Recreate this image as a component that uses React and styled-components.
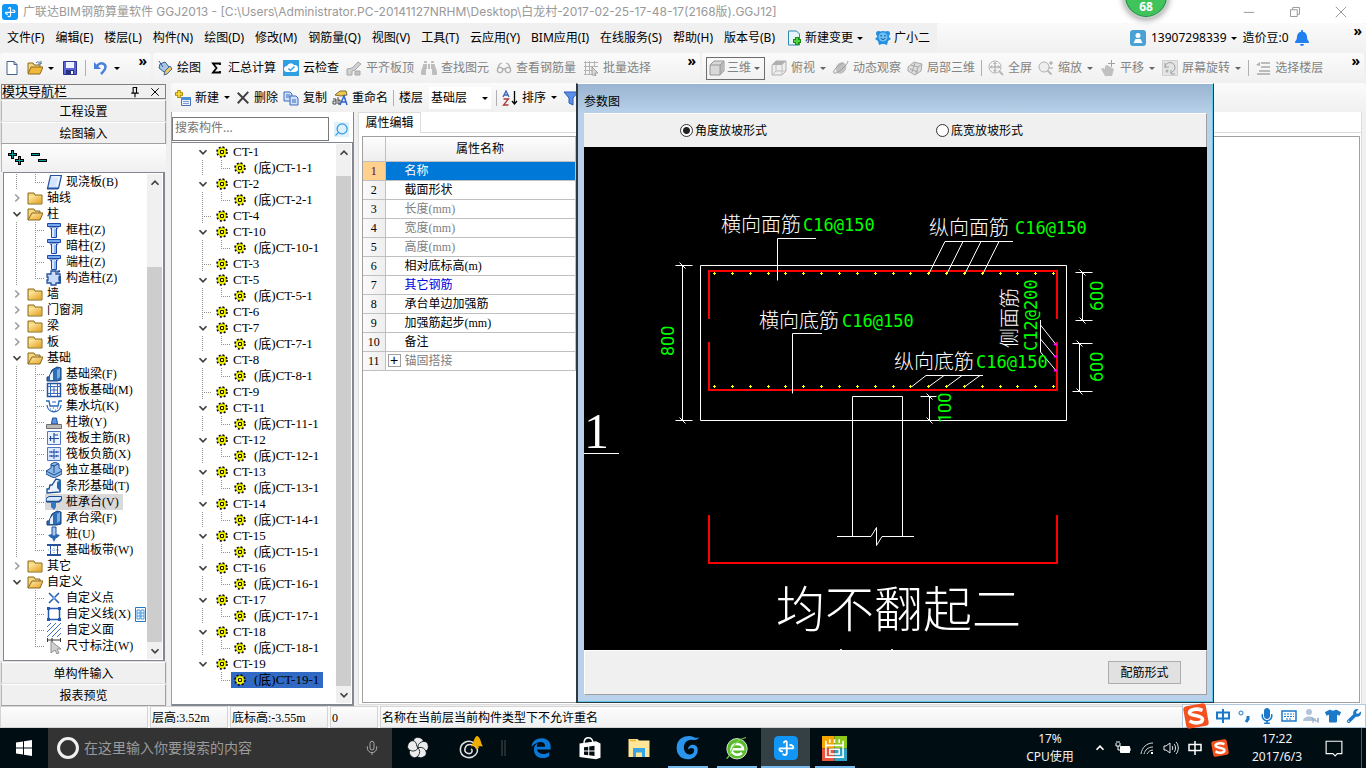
import React, { useState } from 'react';
import styled, { createGlobalStyle, css } from 'styled-components';
import { Glasses, Search, Mic } from 'lucide-react';
import { FaBinoculars, FaBell, FaWrench, FaTshirt, FaMicrophone } from 'react-icons/fa';

const UI_FONT = '"Noto Sans", "Noto Sans CJK SC", sans-serif';
const SONG_FONT = '"Liberation Serif", "Noto Sans CJK SC", serif';

const GlobalStyle = createGlobalStyle`
  * {
    box-sizing: border-box;
  }

  body {
    margin: 0;
    font: 12px/16px ${UI_FONT};
    color: #000;
    background: #f0f0f0;
  }

  button, input, select {
    font: inherit;
    color: inherit;
    margin: 0;
    padding: 0;
    border: 0;
    background: none;
  }

  ul {
    list-style: none;
    margin: 0;
    padding: 0;
  }

  svg {
    display: block;
    flex: none;
  }
`;

const Page = styled.div`
  display: flex;
  flex-direction: column;
  min-height: 100vh;
  overflow: hidden;
`;

/* ---------- title bar ---------- */

const TitleBar = styled.header`
  position: relative;
  display: flex;
  align-items: center;
  height: 23px;
  padding: 0 2px;
  background: #fff;
  color: #999;
  white-space: nowrap;
`;

const TitleText = styled.div`
  flex: 1;
  padding-left: 5px;
  font-family: Inter, "Noto Sans CJK SC", sans-serif;
`;

const WindowButton = styled.button`
  width: 46px;
  height: 20px;
  display: flex;
  align-items: center;
  justify-content: center;
`;

const SpeedBall = styled.div`
  position: absolute;
  right: 197px;
  top: -27px;
  width: 46px;
  height: 46px;
  border-radius: 50%;
  border: 2px solid #c8ccc8;
  background: #3fc35a;
  box-shadow: inset 0 0 0 1px #1f8a4a, 0 1px 6px rgba(0, 0, 0, 0.4);
  color: #fff;
  font-weight: bold;
  line-height: 14px;
  text-align: center;
  padding-top: 25px;
`;

/* ---------- menus and tool bars ---------- */

const MenuBar = styled.nav`
  display: flex;
  height: 30px;
  background: #f0f0f0;
  white-space: nowrap;
`;

const MenuList = styled.div`
  display: flex;
  align-items: center;
  gap: 11px;
  width: 937px;
  padding: 0 0 0 7px;
`;

const MenuButton = styled.button`
  display: flex;
  align-items: center;
  gap: 3px;
`;

const barSurface = css`
  background: linear-gradient(#fbfbfb, #f0f0f0);
  border-radius: 3px;
`;

const MenuFiller = styled.div`
  ${barSurface}
  flex: 1;
`;

const AccountBar = styled.div`
  ${barSurface}
  display: flex;
  align-items: center;
  gap: 5px;
  width: 240px;
  padding: 0 4px;
`;

const ToolRow = styled.div`
  display: flex;
  height: 30px;
  background: #f0f0f0;
`;

const ToolGroup = styled.div`
  ${barSurface}
  display: flex;
  align-items: center;
  gap: ${p => p.$gap || 7}px;
  width: ${p => (p.$width ? `${p.$width}px` : 'auto')};
  flex: ${p => (p.$width ? 'none' : 1)};
  padding: 0 4px;
  margin-right: 2px;
  white-space: nowrap;
`;

const ToolButton = styled.button`
  display: flex;
  align-items: center;
  gap: ${p => (p.$tight ? 2 : 4)}px;
  color: ${p => (p.$dim ? '#838383' : '#000')};
  ${p => p.$boxed && css`
    height: 23px;
    padding: 0 3px 0 2px;
    border: 1px solid #6d6d6d;
  `}
`;

const Separator = styled.span`
  width: 1px;
  height: 16px;
  background: #b0b0b0;
`;

const More = styled.button`
  align-self: flex-start;
  margin-left: auto;
  font-weight: bold;
  font-size: 14px;
  line-height: 16px;
`;

const Arrow = styled.span`
  border: 3px solid transparent;
  border-top-color: ${p => (p.$dim ? '#666' : '#000')};
  border-bottom: 0;
  margin: 0 1px;
`;

const Main = styled.main`
  position: relative;
  display: flex;
  flex: 1;
`;

/* ---------- module navigation ---------- */

const NavPane = styled.aside`
  display: flex;
  flex-direction: column;
  width: 166px;
  padding: 1px 0 0 1px;
  font-family: ${SONG_FONT};
`;

const PaneCaption = styled.div`
  display: flex;
  align-items: center;
  gap: 8px;
  height: 15px;
  margin-bottom: 1px;
  padding-right: 4px;
  border: 1px solid #808080;
  line-height: 13px;
  font-size: 13px;

  span {
    flex: 1;
  }
`;

const PaneButton = styled.button`
  height: 22px;
  padding-top: 1px;
  border: 1px solid;
  border-color: #fff #a0a0a0 #a0a0a0 #b8b8b8;
  background: #f0f0f0;
  box-shadow: 0 0 0 1px #e0e0e0;
`;

const PaneTools = styled.div`
  display: flex;
  gap: 7px;
  align-items: center;
  height: 28px;
  padding-left: 6px;
  border-left: 1px solid #b8b8b8;
  background: linear-gradient(#fdfdfd, #f0f0f0);
`;

const TreeBox = styled.div`
  display: flex;
  flex: 1;
  background: #fff;
  border: 1px solid #828790;
  border-right-width: 2px;
  border-bottom-width: 2px;
  margin: 0 1px 0 2px;
  padding: 1px 1px 1px 0;
`;

const TreeList = styled.ul`
  flex: 1;
  padding-left: ${p => p.$indent}px;
  overflow: hidden;
  font-family: ${SONG_FONT};
  font-size: ${p => p.$size || 12}px;
`;

const TreeRow = styled.li`
  display: flex;
  align-items: center;
  height: 16px;
  white-space: nowrap;
`;

const dotsDown = 'repeating-linear-gradient(#909090 0 1px, transparent 1px 2px)';
const dotsRight = 'repeating-linear-gradient(90deg, #909090 0 1px, transparent 1px 2px)';

const guides = {
  none: css``,
  down: css`
    background: ${dotsDown} 9px 0 / 1px 16px no-repeat;
  `,
  branch: css`
    background: ${dotsDown} 9px 0 / 1px 16px no-repeat, ${dotsRight} 9px 8px / 10px 1px no-repeat;
  `,
  end: css`
    background: ${dotsDown} 9px 0 / 1px 8px no-repeat, ${dotsRight} 9px 8px / 10px 1px no-repeat;
  `,
};

const Guide = styled.span`
  display: flex;
  align-items: center;
  justify-content: center;
  flex: none;
  width: 19px;
  height: 16px;
  ${p => guides[p.$kind || 'none']}
`;

const TreeLabel = styled.span`
  display: flex;
  align-items: center;
  gap: ${p => p.$gap || 4}px;
  height: 16px;
  padding: 0 4px 0 ${p => p.$inset || 1}px;
  background: ${p => p.$selected || 'none'};
`;

const ScrollTrack = styled.div`
  display: flex;
  flex-direction: column;
  align-items: center;
  width: 15px;
  background: #f0f0f0;
`;

const ScrollButton = styled.button`
  display: flex;
  align-items: center;
  justify-content: center;
  width: 15px;
  height: 17px;
`;

const ScrollSpace = styled.div`
  flex: ${p => p.$share};
  width: 100%;
  background: ${p => (p.$thumb ? '#cdcdcd' : 'none')};
`;

/* ---------- work area ---------- */

const WorkArea = styled.section`
  display: flex;
  flex-direction: column;
  flex: 1;
  margin-left: 5px;
  min-width: 0;
`;

const LocalTools = styled.div`
  ${barSurface}
  display: flex;
  align-items: center;
  gap: 5px;
  height: 29px;
  padding-left: 4px;
  white-space: nowrap;
`;

const FloorPicker = styled.label`
  display: flex;
  align-items: center;
  gap: 6px;
`;

const FloorSelect = styled.select`
  appearance: none;
  width: 62px;
  height: 22px;
  padding-left: 2px;
  background: #fff url("data:image/svg+xml,%3Csvg xmlns='http://www.w3.org/2000/svg' width='6' height='3'%3E%3Cpath d='M0 0h6L3 3z'/%3E%3C/svg%3E") no-repeat 53px 10px;
  border-radius: 0;
`;

const Panels = styled.div`
  display: flex;
  flex: 1;
`;

const ComponentPane = styled.section`
  display: flex;
  flex-direction: column;
  width: 183px;
  background: #fff;
  border-right: 1px solid #828790;
  border-left: 1px solid #a0a0a0;

  ${TreeBox} {
    margin: 0;
    border-left: 0;
    border-right-width: 1px;
  }
`;

const SearchRow = styled.form`
  display: flex;
  gap: 5px;
  align-items: center;
  padding: 5px 0 1px;
`;

const SearchInput = styled.input`
  width: 157px;
  height: 24px;
  border: 1px solid #7a7a7a;
  background: #fff;
  padding: 0 2px 3px;

  &::placeholder {
    color: #757575;
  }
`;

const SearchButton = styled.button`
  width: 15px;
  height: 15px;
  color: #2f9be6;
  background: #dff0fb;
`;

const PropertyPane = styled.section`
  display: flex;
  flex-direction: column;
  flex: 1;
  margin: 0 4px 1px;
  background: #fff;
  border: 1px solid #dcdcdc;
  border-top: 0;
`;

const Tabs = styled.div`
  display: flex;
  height: 21px;
`;

const Tab = styled.button`
  width: 62px;
  border: 1px solid #dcdcdc;
  border-left: 0;
  border-bottom: 0;
`;

const TabRest = styled.div`
  flex: 1;
  border-bottom: 1px solid #dcdcdc;
`;

const GridBox = styled.div`
  flex: 1;
  margin: 3px 1px 1px 3px;
  border: 1px solid #a0a0a0;
`;

const PropertyTable = styled.table`
  border-collapse: collapse;
  table-layout: fixed;
  width: 212px;
  font-family: ${SONG_FONT};

  th, td {
    height: 19px;
    padding: 0;
    border: 1px solid #c0c0c0;
    border-top: 0;
    border-left: 0;
    line-height: 14px;
    font-weight: normal;
  }

  th {
    background: linear-gradient(90deg, #fafafa, #eee);
  }

  thead th {
    height: 24px;
    background: linear-gradient(#fdfdfd, #eee);
  }
`;

const PropRow = styled.tr`
  color: ${p => p.$color || '#000'};

  th {
    color: #000;
  }

  ${p => p.$active && css`
    color: #fff;

    td {
      background: #0078d7;
    }

    && th {
      background: #ffd18c;
      color: #600040;
    }
  `}
`;

const PropName = styled.div`
  display: flex;
  align-items: center;
  gap: 4px;
  padding-left: ${p => (p.$expandable ? 2 : 19)}px;
`;

const Expander = styled.button`
  width: 13px;
  height: 13px;
  border: 1px solid #a0a0a0;
  font: 14px/9px "Liberation Sans", sans-serif;
  color: #000;
`;

/* ---------- dialog ---------- */

const Dialog = styled.section`
  position: absolute;
  top: 0;
  right: 152px;
  bottom: 3px;
  left: 576px;
  display: flex;
  flex-direction: column;
  padding: 0 6px 7px;
  border: 1px solid #303840;
  border-top-color: #fff;
  border-left-width: 2px;
  background: linear-gradient(#99b4d1, #b9d1ea 30px);
  box-shadow: inset 0 -1px #5cc8e8, inset -1px 0 #5cc8e8;
`;

const DialogTitle = styled.h2`
  margin: 0;
  padding-top: 10px;
  height: 29px;
  font-size: 12px;
  line-height: 16px;
  font-weight: normal;
`;

const RadioBar = styled.div`
  display: flex;
  align-items: center;
  height: 34px;
  background: #f0f0f0;
  border-top: 1px solid #fff;
  border-right: 1px solid #a0a0a0;
`;

const RadioLabel = styled.label`
  display: flex;
  align-items: center;
  gap: 2px;
  width: 256px;

  &:first-child {
    margin-left: 96px;
  }
`;

const Radio = styled.input`
  appearance: none;
  width: 13px;
  height: 13px;
  border: 1px solid #333;
  border-radius: 50%;
  background: #fff;

  &:checked {
    background: radial-gradient(circle, #222 3px, #fff 4px);
  }
`;

const Canvas = styled.div`
  flex: 1;
  background: #000;

  svg {
    width: 100%;
    height: 100%;
  }
`;

const DialogFooter = styled.div`
  display: flex;
  justify-content: flex-end;
  align-items: center;
  height: 45px;
  padding-right: 25px;
  background: #f0f0f0;
  border: 1px solid #a0a0a0;
  border-top: 1px solid #fff;
  border-left-color: #fff;
`;

const PushButton = styled.button`
  width: 73px;
  height: 23px;
  border: 1px solid #adadad;
  background: #e1e1e1;
`;

/* ---------- status bar, input method bar, task bar ---------- */

const StatusBar = styled.footer`
  position: relative;
  display: flex;
  gap: 2px;
  height: 22px;
  background: #f8f8f8;
  font-family: ${SONG_FONT};
  line-height: 22px;
  white-space: nowrap;
`;

const StatusCell = styled.div`
  width: ${p => (p.$width ? `${p.$width}px` : 'auto')};
  flex: ${p => (p.$width ? 'none' : 1)};
  padding-left: 1px;
  border: 1px solid #d4d4d4;
  background: linear-gradient(#fdfdfd, #f0f0f0);
`;

const ImeBar = styled.div`
  position: absolute;
  right: 0;
  bottom: 0;
  display: flex;
  align-items: center;
  gap: 6px;
  width: 184px;
  height: 24px;
  background: #fbfdff;
  border: 1px solid #b4c8dc;
  color: #1c78c8;
`;

const TaskBar = styled.div`
  display: flex;
  height: 40px;
  background: #000d12;
  color: #f2f2f2;
`;

const StartButton = styled.button`
  display: flex;
  align-items: center;
  justify-content: center;
  width: 48px;
`;

const CortanaBox = styled.label`
  display: flex;
  align-items: center;
  gap: 4px;
  width: 344px;
  padding: 0 12px 0 8px;
  background: #333;
`;

const CortanaInput = styled.input`
  flex: 1;
  font-size: 14px;
  outline: 0;

  &::placeholder {
    color: #9a9a9a;
  }
`;

const TaskButton = styled.button`
  display: flex;
  align-items: center;
  justify-content: center;
  width: ${p => p.$width || 49}px;
  ${p => p.$running && css`
    background: linear-gradient(#76b9ed, #76b9ed) no-repeat center bottom / ${p.$active ? 49 : 40}px 2px ${p.$active ? '#354045' : ''};
  `}
`;

const Tray = styled.div`
  display: flex;
  align-items: center;
  gap: 8px;
  margin-left: auto;
`;

const TrayText = styled.div`
  width: ${p => p.$width}px;
  line-height: 18px;
  text-align: center;
`;

const DesktopEdge = styled.button`
  width: 5px;
  height: 40px;
  margin-left: 10px;
  border-left: 1px solid #50585c;
`;

/* ---------- icons ---------- */

const Svg = ({ size = 16, children, ...rest }) => (
  <svg width={size} height={size} viewBox="0 0 16 16" fill="none" aria-hidden="true" {...rest}>
    {children}
  </svg>
);

const BrandIcon = ({ size }) => (
  <Svg size={size}>
    <rect width="16" height="16" rx="3" fill="#1296f5" />
    <path d="M8.500 3.500v8c0 1.500-2.500 1.500-2.500.2M3.500 8.300h9.500M13 8.300c0-2-1.500-2.600-2.700-2.100M3.500 8.300c0 1.700 1.200 2.200 2.300 1.600M8.500 3.600c-1.200-.4-2 .3-1.800 1.200" stroke="#fff" strokeWidth="1.200" />
  </Svg>
);

const icons = {
  newFile: <Svg><path d="M3 1.5h7l3 3v10H3z" fill="#fff" stroke="#44618c" /><path d="M10 1.5v3h3" stroke="#44618c" /></Svg>,
  open: <Svg><path d="M1 13V3h5l1 2h6v2" fill="#f5d683" stroke="#8d6a1e" /><path d="M1 14l3-7h12l-3 7z" fill="#f1b93c" stroke="#8d6a1e" /><path d="M9 3c2-2 4-1 5 1M14 1v3h-3" stroke="#4a6b8f" /></Svg>,
  save: <Svg><path d="M1.500 1.500h13v13h-13z" fill="#5a64d4" stroke="#2c3590" /><path d="M4 2h8v6H4z" fill="#eef1ff" /><path d="M4 10h8v4H4z" fill="#26307e" /><path d="M9 11h2v3H9z" fill="#fff" /></Svg>,
  undo: <Svg><path d="M1 2v7h7z" fill="#4a80d8" /><path d="M4 6c4-5 10-2 8 3-1 2-2 3-4 5" stroke="#4a80d8" strokeWidth="2.500" /></Svg>,
  draw: <Svg><path d="M3 4l5-2 4 5-5 5-5-4z" fill="#a9c8e8" stroke="#345c8c" /><path d="M2 1l4 6" stroke="#345c8c" /><path d="M13 6l2 3-5 5-3 1 1-4z" fill="#f0c75a" stroke="#46699b" /></Svg>,
  sigma: <Svg><path d="M12 5V3.500H5l3.500 4.500L5 12.500h7V11" stroke="#000" strokeWidth="1.800" /></Svg>,
  cloud: <Svg><rect width="16" height="16" fill="#2e9fe0" /><path d="M4 12a3 3 0 010-6 4 4 0 017-1 3.500 3.500 0 011 7z" fill="#fff" /><path d="M5.500 8.500l2 2 4-4" stroke="#2e9fe0" strokeWidth="1.500" /></Svg>,
  slab: <Svg><path d="M1 9l5-1 6-6 3 2-6 6-3 1v4H1z" fill="#d0d0d0" stroke="#a8a8a8" /><path d="M9 15v-4h5v4z" fill="#c4c4c4" stroke="#a8a8a8" /></Svg>,
  find: <FaBinoculars size={16} color="#bdbdbd" />,
  glasses: <Glasses size={16} color="#b0b0b0" />,
  batch: <Svg><path d="M1 2.500h14M1 6.500h14M1 10.500h8M2.500 1v14M6.500 1v14M11.500 1v6M1 14.500h8" stroke="#b4b4b4" /><path d="M9 7l6 6-3 0 1 3-2-1-2 0z" fill="#d8d8d8" stroke="#a0a0a0" /></Svg>,
  cube: <Svg><path d="M1 5l4-4h10v10l-4 4H1z" fill="#d8d8d8" stroke="#989898" /><path d="M11 5l4-4v10l-4 4z" fill="#b8b8b8" /><path d="M1 5h10v10M11 5l4-4" stroke="#989898" /></Svg>,
  top: <Svg><path d="M1 5l4-4h10v10l-4 4H1z" fill="#eee" stroke="#b0b0b0" /><path d="M1 5l4-4h10l-4 4z" fill="#b0b0b0" /><path d="M11 5v10M5 5v6M5 11h10M5 11l-4 4" stroke="#c0c0c0" /></Svg>,
  orbit: <Svg><ellipse cx="8" cy="8" rx="5" ry="6" transform="rotate(35 8 8)" fill="#c0c0c0" /><path d="M15 1c0 4-12 14-14 12s4-8 9-10" stroke="#a0a0a0" /></Svg>,
  part: <Svg><path d="M1 7l6-5 8 2-1 7-6 4-7-4z" fill="#ddd" stroke="#a8a8a8" /><path d="M4 5l7 2-2 7M8 3l-3 9M3 9l8 3M11 7l3-2" stroke="#a8a8a8" /></Svg>,
  full: <Svg><circle cx="7" cy="7" r="6" stroke="#b0b0b0" /><path d="M7 2.500v9M2.500 7h9M5.500 4L7 2.500 8.500 4M5.500 10L7 11.500 8.500 10M4 5.500L2.500 7 4 8.500M10 5.500L11.500 7 10 8.500" stroke="#a0a0a0" /><path d="M11 11l4 4" stroke="#b8b8b8" strokeWidth="2" /></Svg>,
  zoom: <Svg><circle cx="6" cy="7" r="5" fill="#eee" stroke="#b0b0b0" /><path d="M9.500 10.500l4 4" stroke="#b8b8b8" strokeWidth="2" /><path d="M13 1v4M11 3h4M11 8h4" stroke="#a0a0a0" /></Svg>,
  pan: <Svg><path d="M1 9l2-1 2 1V6l2-1 5 3 2 1-2 7H5z" fill="#c0c0c0" /><path d="M11.500 0v7M8 3.500h7" stroke="#a0a0a0" /></Svg>,
  rotate: <Svg><path d="M.500.500h15v15H.500z" fill="#e4e4e4" stroke="#d0d0d0" /><path d="M3 8a5 5 0 119 2.500l-3 2.500M9 10v4h4M3 3v4h4" stroke="#a0a0a0" /><circle cx="5" cy="11" r="1.500" fill="#b0b0b0" /></Svg>,
  floor: <Svg><path d="M6 3h9M6 7h9M4 11h11M2 14h13" stroke="#a8a8a8" strokeWidth="1.500" /><path d="M1 5l4-3v4z" fill="#b0b0b0" /></Svg>,
  create: <Svg><path d="M6.500 7.500h9v8h-9z" fill="#eaf2ff" stroke="#4a72b8" /><path d="M6 7h10v3H6z" fill="#4a90d8" /><path d="M8 11.500h6M8 13.500h6" stroke="#7a9ad0" /><path d="M4 0v8M0 4h8" stroke="#a98500" strokeWidth="3.500" /><path d="M4 1v6M1 4h6" stroke="#ffe13c" strokeWidth="1.600" /></Svg>,
  remove: <Svg size={14}><path d="M2 2l12 12M14 1L2 14" stroke="#404040" strokeWidth="2.200" /></Svg>,
  copy: <Svg><path d="M1 2h6l2 2v7H1z" fill="#cfe0fa" stroke="#3c6abf" /><path d="M7 6h6l2 2v7H7z" fill="#cfe0fa" stroke="#3c6abf" /><path d="M3 5h4M3 7h4M9 10h4M9 12h4" stroke="#3c6abf" /></Svg>,
  rename: <Svg><path d="M3 5l5-4h6l1 4-6 1z" fill="#f2c84c" stroke="#7c6a30" /><path d="M1 9h3v5H1v-3h3M6 7v7h2v-4H6" stroke="#444" /><path d="M8 15l4-9 3 9M10 12h4" stroke="#2f62c8" strokeWidth="1.500" /></Svg>,
  sort: <Svg><path d="M1 7l3-6 3 6M2 5h4" stroke="#3a64b8" strokeWidth="1.300" /><path d="M1.500 9h5l-5 6h5" stroke="#a83a3a" strokeWidth="1.300" /><path d="M12.500 1v13M10 11l2.500 3 2.500-3" stroke="#000" strokeWidth="1.300" /></Svg>,
  filter: <Svg><path d="M1 2h14l-5 6v7l-4-2V8z" fill="#5a90e8" stroke="#2a5cb8" /></Svg>,
  change: <Svg><path d="M2.500 1h8l3 3v11h-11z" fill="#e8f6fc" stroke="#2f88b0" /><path d="M11 7v8M7 11h8" stroke="#188a18" strokeWidth="4" /><path d="M11 8v6M8 11h6" stroke="#52d23c" strokeWidth="2" /></Svg>,
  mascot: <Svg><circle cx="3.500" cy="3.500" r="2.500" fill="#258fe0" /><circle cx="12.500" cy="3.500" r="2.500" fill="#258fe0" /><path d="M8 1c4 0 6 3 6 6l2 2-3 2-1 4-3-1H7l-3 1-1-4-3-2 2-2c0-3 2-6 6-6z" fill="#258fe0" /><circle cx="8" cy="7" r="4.500" fill="#6cc0f8" /><path d="M6 8c1 2 3 2 4 0M6 5v1.500M10 5v1.500" stroke="#0d3d6c" /></Svg>,
  account: <Svg><rect width="16" height="16" rx="3" fill="#4aa2d4" /><path d="M8 3a2.500 2.500 0 010 5 2.500 2.500 0 010-5zM3.500 13l2-4h5l2 4z" fill="#fff" /></Svg>,
  folder: <Svg><path d="M1 3h6l1 2h7v9H1z" fill="#f6d77a" stroke="#86661e" /><path d="M2 6h12v7H2z" fill="url(#folderFill)" /></Svg>,
  folderOpen: <Svg><path d="M1 14V3h6l1 2h5v3" fill="#f6d77a" stroke="#86661e" /><path d="M1 14l4-7h11l-3 7z" fill="url(#folderFill)" stroke="#86661e" /></Svg>,
  gear: (
    <Svg size={12}>
      <circle cx="8" cy="8" r="6" fill="#ff0" stroke="#000" strokeWidth="3.500" strokeDasharray="2.400 2.300" />
      <circle cx="8" cy="8" r="5.500" fill="#ff0" stroke="#6a6a00" strokeDasharray="2 2" />
      <circle cx="8" cy="8" r="2.300" fill="#ff0" stroke="#000" strokeWidth="1.400" />
    </Svg>
  ),
  slabCast: <Svg><path d="M4.500 1.500h11l-3 13h-11z" fill="#d4e6ff" stroke="#24509c" strokeWidth="1.200" /><path d="M6 3h7l-2 9" stroke="#fff" /><path d="M1 14.500h11" stroke="#24509c" strokeWidth="2" /></Svg>,
  column: <Svg><path d="M1.500 1.500h13v3h-13z" fill="#78a8f0" stroke="#1c48a8" /><path d="M3 5.500h10l-2 1.500H5z" fill="#1c48a8" /><path d="M5.500 6v9.500h5V6" fill="#d8e8ff" stroke="#1c48a8" /><path d="M9 7v8" stroke="#5088e0" /></Svg>,
  columnBuilt: <Svg><path d="M5 1h5v3h4v3h-1v3h1v3h-4v2H5v-2H1v-3h1V7H1V4h4z" fill="#c8dcfa" stroke="#24509c" strokeWidth="1.300" /><path d="M11 2l3-1M12 13l3-1M14 6v5" stroke="#24509c" strokeWidth="2" /></Svg>,
  beam: <Svg><path d="M1 15v-4h2l3-7 5-3 4 1v12l-4 1z" fill="#2e6cb4" stroke="#164078" /><path d="M4 14V9l3-4v9z" fill="#e6f0ff" /><path d="M11 4l3-2v9l-3 2z" fill="#75aee4" /></Svg>,
  raft: <Svg><path d="M1.500 1.500h13v13h-13z" stroke="#2454a4" strokeWidth="1.500" /><path d="M4.500 2v12M11.500 2v12M2 4.500h12M2 11.500h12M8 4v8M4 8h8" stroke="#3c6cbc" /></Svg>,
  pit: <Svg><path d="M0 3h3l1 5h8l1-5h3M1 7c1 9 13 9 14 0" stroke="#2868bc" strokeWidth="1.300" /><path d="M4 11h1M7 10h1M9 12h1M11 10h1M6 13h1M6 4h4" stroke="#2868bc" /></Svg>,
  pier: <Svg><path d="M5.500 10l1-6h4l1 6z" fill="#5f97e0" stroke="#1e4c9c" /><path d="M.500 10.500h15v4H.500z" fill="#bbb" stroke="#707070" /></Svg>,
  mainBar: <Svg><path d="M1.500 1.500h13v13h-13z" fill="#eaf1ff" stroke="#5077c4" /><path d="M8 3v10M3 8.500h10M4.500 6v5M8 5h4" stroke="#204ca0" strokeWidth="1.200" /></Svg>,
  negBar: <Svg><path d="M1.500 1.500h13v13h-13z" fill="#dce8ff" stroke="#5077c4" /><path d="M8 3v10M3 6h10M3 10h10M5 5l1 2M11 5l-1 2M5 9l1 2M11 9l-1 2" stroke="#204ca0" /></Svg>,
  isolated: <Svg><path d="M0 9l5-3V2l4-2 4 2v4l3 2v4l-8 4-8-4z" fill="#8ab8ea" stroke="#1c4c8c" /><path d="M8 3v8M5 3l3 1 4-2M0 9l8 4 8-4" stroke="#1c4c8c" /></Svg>,
  strip: <Svg><path d="M1 15v-4h2l1-4h2l4-6 4 1v12z" fill="#edf4ff" stroke="#1c4c94" strokeWidth="1.300" /><path d="M11 4l4-2v12l-4-4z" fill="#2868b0" /></Svg>,
  cap: <Svg><path d="M0 4.500l3-2h12.500V6l-2 2H.500z" fill="#d8e8fc" stroke="#1c4c94" /><path d="M1 7.500h12l2-2" stroke="#1c4c94" strokeWidth="1.500" /><path d="M5 8h5v5l-2 3-3-3z" fill="#3478c4" /></Svg>,
  pile: <Svg><path d="M6 1h4v9H6z" fill="#a8c8f4" stroke="#1c4c94" /><path d="M2 9l4-1v2h4V8l4 1-3 3H5z" fill="#2868b0" /><path d="M6 12l2 4 2-4z" fill="#2868b0" /></Svg>,
  band: <Svg><path d="M1 3h14M1 13h14" stroke="#24509c" strokeWidth="2" /><path d="M4.500 4v8M11.500 4v8" stroke="#24509c" /><path d="M8 4v8M2 8h12" stroke="#80a4dc" strokeDasharray="1 1" /></Svg>,
  point: <Svg><path d="M3 3l10 10M13 3L3 13" stroke="#2458b0" strokeWidth="1.500" /><path d="M6.500 6.500h3v3h-3z" fill="#6ba2ec" /></Svg>,
  line: <Svg><path d="M2.500 2.500h11v11h-11z" stroke="#2458b0" strokeWidth="1.500" /><path d="M1 1h3v3H1zM12 1h3v3h-3zM1 12h3v3H1zM12 12h3v3h-3z" fill="#2458b0" /></Svg>,
  face: <Svg><path d="M1 5l4-4M1 10l9-9M1 15L15 1M6 15l9-9M11 15l4-4" stroke="#4069c0" /></Svg>,
  dimension: <Svg><path d="M1 2h14M1.500 0v4M14.500 0v4M6 0v4" stroke="#333" /><path d="M5 3l10 8-4 0 2 4-2 1-2-4-4 3z" fill="#d0d0d0" stroke="#909090" /></Svg>,
  petals: (
    <Svg size={24}>
      {[0, 72, 144, 216, 288].map(a => (
        <path key={a} d="M8 8C4 7.500 4 1.500 7 1c3-.4 5 1.500 4.500 3.500C11.200 6.500 9 6 8 8z" fill="#ececec" stroke="#000d12" strokeWidth=".5" transform={`rotate(${a} 8 8)`} />
      ))}
    </Svg>
  ),
  swirl: <Svg size={28}><path d="M10 5c-3-2-7.500 0-7.500 4S8 15 11 12s0-6-3-6-4 4-1.500 5S10 9 8.500 8.500" stroke="#e0e0e0" strokeWidth=".9" /><path d="M8.500 7c1.500-1 1.500-5 3.500-6 2.500 1 2 5 3.500 6z" fill="#eeae00" /><circle cx="12" cy="7.500" r="1" fill="#eeae00" /></Svg>,
  edge: <Svg size={22}><path d="M1 7C2-1 14-1 15 6v3H5c1 4 6 4 9 2v3c-5 3-12 1-11-6 0-2 2-3 3-4-1 1-1 2-1 3h6C11 2 5 3 1 7z" fill="#0a78d7" /></Svg>,
  store: <Svg size={24}><path d="M4 5c0-5 5-5 6-1" stroke="#fff" /><path d="M1 5l11-1.500L15 5v9.500L12 15.500 1 14z" fill="#fff" /><path d="M4 7.500l2.800-.4v2.600H4zM7.500 7L11 6.500v3.200H7.500zM4 10.300h2.800v2.500L4 12.500zM7.500 10.300H11v3l-3.500-.4z" fill="#000d12" /></Svg>,
  explorer: <Svg size={24}><path d="M1 2h6l1 1h7v11H1z" fill="#ffe597" /><path d="M2 3h4" stroke="#e8b830" /><path d="M4 8h8v6h-2v-3H6v3H4z" fill="#35a5e5" /></Svg>,
  glodon: <Svg size={26}><path d="M15 1c-1 2-2 2-4 2-7-1-7 9-2 9 3 0 4-4 1-4-1 0-2 1-2 1 0-4 6-4 6 0 0 8-13 8-13-1C1 1 8 0 11 1c2 1 3 1 4 0z" fill="#2a94ee" /></Svg>,
  browser: <Svg size={24}><circle cx="8" cy="8.500" r="6.800" fill="#58bb2c" stroke="#e4f4dc" strokeWidth=".6" /><path d="M4.500 8.800H12C11.800 4.500 4.500 4 4.300 8.800c.2 4 5 4.500 7 2.400" stroke="#fff" strokeWidth="1.700" /><path d="M1 15C5 13 3 4 14 1" stroke="#7ed650" strokeWidth=".8" /></Svg>,
  rainbow: <Svg size={25}><path d="M0 0h8v8H0z" fill="#f6a400" /><path d="M8 0h8v8H8z" fill="#8cc81c" /><path d="M0 8h8v8H0z" fill="#e8553c" /><path d="M8 8h8v8H8z" fill="#2ea2c2" /><path d="M2.500 3v10.500h11V3M2 6h12M5 8.500h6v3H5zM5 2v2.500M11 2v2.500M8 2v2.500" stroke="#fff" /></Svg>,
  battery: <Svg><path d="M5.500 6.500h9v6h-9z" fill="#fff" stroke="#fff" /><path d="M15 8v3M1 3v3h4V3M2 1v2M4 1v2M3 6v4h2" stroke="#fff" /></Svg>,
  wifi: <Svg><path d="M2 14C3 7 8 3 14 3M5 14c1-4 4-7 9-7M8 14c1-2 3-4 6-4" stroke="#d8d8d8" /><path d="M12 12h2v2h-2z" fill="#fff" /></Svg>,
  speaker: <Svg><path d="M1 6h2l4-3v10l-4-3H1zM9 6c1 1 1 3 0 4M11 4c2 2 2 6 0 8M13 2c3 3 3 9 0 12" stroke="#e8e8e8" /></Svg>,
  notes: <Svg size={18}><path d="M1 2h14v11h-4l-2 2-2-2H1z" stroke="#fff" /></Svg>,
};

const SogouIcon = ({ size }) => (
  <Svg size={size}>
    <rect x="1" y="1" width="14" height="14" rx="2" fill="#f4511e" transform="rotate(-10 8 8)" />
    <path d="M12 4.500C8 3 4 4 4 6s8 1.500 8 4-5 3-8 1" stroke="#fff" strokeWidth="2.200" />
  </Svg>
);

const Chevron = ({ dir, color = '#404040' }) => {
  const shapes = { down: 'M4 6l4 4 4-4', up: 'M4 10l4-4 4 4', right: 'M6 4l4 4-4 4' };
  return <Svg size={14}><path d={shapes[dir]} stroke={color} strokeWidth="2" /></Svg>;
};

/* ---------- data ---------- */

const menus = ['文件(F)', '编辑(E)', '楼层(L)', '构件(N)', '绘图(D)', '修改(M)', '钢筋量(Q)', '视图(V)', '工具(T)', '云应用(Y)', 'BIM应用(I)', '在线服务(S)', '帮助(H)', '版本号(B)'];

const drawTools = [
  { icon: 'draw', text: '绘图' },
  { icon: 'sigma', text: '汇总计算' },
  { icon: 'cloud', text: '云检查' },
  { icon: 'slab', text: '平齐板顶', dim: true },
  { icon: 'find', text: '查找图元', dim: true },
  { icon: 'glasses', text: '查看钢筋量', dim: true },
  { icon: 'batch', text: '批量选择', dim: true },
];

const viewTools = [
  { icon: 'cube', text: '三维', arrow: true, boxed: true },
  { icon: 'top', text: '俯视', arrow: true },
  { icon: 'orbit', text: '动态观察' },
  { icon: 'part', text: '局部三维' },
  null,
  { icon: 'full', text: '全屏' },
  { icon: 'zoom', text: '缩放', arrow: true },
  { icon: 'pan', text: '平移', arrow: true },
  { icon: 'rotate', text: '屏幕旋转', arrow: true },
  null,
  { icon: 'floor', text: '选择楼层' },
];

const modules = [
  { leaf: true, icon: 'slabCast', text: '现浇板(B)', end: true },
  { text: '轴线' },
  { text: '柱', open: true },
  { leaf: true, icon: 'column', text: '框柱(Z)' },
  { leaf: true, icon: 'column', text: '暗柱(Z)' },
  { leaf: true, icon: 'column', text: '端柱(Z)' },
  { leaf: true, icon: 'columnBuilt', text: '构造柱(Z)', end: true },
  { text: '墙' },
  { text: '门窗洞' },
  { text: '梁' },
  { text: '板' },
  { text: '基础', open: true },
  { leaf: true, icon: 'beam', text: '基础梁(F)' },
  { leaf: true, icon: 'raft', text: '筏板基础(M)' },
  { leaf: true, icon: 'pit', text: '集水坑(K)' },
  { leaf: true, icon: 'pier', text: '柱墩(Y)' },
  { leaf: true, icon: 'mainBar', text: '筏板主筋(R)' },
  { leaf: true, icon: 'negBar', text: '筏板负筋(X)' },
  { leaf: true, icon: 'isolated', text: '独立基础(P)' },
  { leaf: true, icon: 'strip', text: '条形基础(T)' },
  { leaf: true, icon: 'cap', text: '桩承台(V)', selected: true },
  { leaf: true, icon: 'beam', text: '承台梁(F)' },
  { leaf: true, icon: 'pile', text: '桩(U)' },
  { leaf: true, icon: 'band', text: '基础板带(W)', end: true },
  { text: '其它' },
  { text: '自定义', open: true },
  { leaf: true, icon: 'point', text: '自定义点', last: true },
  { leaf: true, icon: 'line', text: '自定义线(X)', last: true, badge: true },
  { leaf: true, icon: 'face', text: '自定义面', last: true },
  { leaf: true, icon: 'dimension', text: '尺寸标注(W)', last: true, end: true },
];

const order = [1, 2, 4, 10, 3, 5, 6, 7, 8, 9, 11, 12, 13, 14, 15, 16, 17, 18, 19];
const childless = [4, 3, 6, 9];

const properties = [
  { name: '名称' },
  { name: '截面形状' },
  { name: '长度(mm)', color: '#808080' },
  { name: '宽度(mm)', color: '#808080' },
  { name: '高度(mm)', color: '#808080' },
  { name: '相对底标高(m)' },
  { name: '其它钢筋', color: '#0000e0' },
  { name: '承台单边加强筋' },
  { name: '加强筋起步(mm)' },
  { name: '备注' },
  { name: '锚固搭接', color: '#808080', expandable: true },
];

/* ---------- parts ---------- */

const Tool = ({ icon, text, arrow, dim, boxed }) => (
  <ToolButton $dim={dim} $boxed={boxed} $tight={boxed}>
    {icons[icon]}
    {text}
    {arrow && <Arrow $dim={dim} />}
  </ToolButton>
);

const Scroll = ({ before, thumb, after }) => (
  <ScrollTrack>
    <ScrollButton aria-label="up"><Chevron dir="up" /></ScrollButton>
    <ScrollSpace $share={before} />
    <ScrollSpace $share={thumb} $thumb />
    <ScrollSpace $share={after} />
    <ScrollButton aria-label="down"><Chevron dir="down" /></ScrollButton>
  </ScrollTrack>
);

const ModuleRow = ({ item }) => {
  if (!item.leaf) {
    return (
      <TreeRow>
        <Guide><Chevron dir={item.open ? 'down' : 'right'} color={item.open ? '#404040' : '#a0a0a0'} /></Guide>
        <TreeLabel>
          {icons[item.open ? 'folderOpen' : 'folder']}
          {item.text}
        </TreeLabel>
      </TreeRow>
    );
  }
  return (
    <TreeRow>
      <Guide $kind={item.last ? 'none' : 'down'} />
      <Guide $kind={item.end ? 'end' : 'branch'} />
      <TreeLabel $selected={item.selected && '#d9d9d9'}>
        {icons[item.icon]}
        {item.text}
        {item.badge && (
          <svg width="11" height="15" viewBox="0 0 11 15" fill="none">
            <path d="M.5.5h10v14H.5z" fill="#fff" stroke="#2478c8" />
            <path d="M2 3h3v9H2zM6 3h3v9H6zM2 6h3M2 9h3M6 6h3M6 9h3" stroke="#3f98e8" />
          </svg>
        )}
      </TreeLabel>
    </TreeRow>
  );
};

const ComponentRows = ({ id }) => {
  const hasChild = !childless.includes(id);
  return (
    <>
      <TreeRow>
        <Guide $kind={hasChild ? 'none' : 'branch'}>{hasChild && <Chevron dir="down" />}</Guide>
        <Guide>{icons.gear}</Guide>
        <TreeLabel $inset={2}>CT-{id}</TreeLabel>
      </TreeRow>
      {hasChild && (
        <TreeRow>
          <Guide $kind={id === 19 ? 'none' : 'down'} />
          <Guide $kind="end" />
          <TreeLabel $gap={8} $inset={3} $selected={id === 19 && '#316ac5'}>
            {icons.gear}
            (底)CT-{id}-1
          </TreeLabel>
        </TreeRow>
      )}
    </>
  );
};

const LabelText = styled.text`
  font: 20px "Noto Sans CJK SC", sans-serif;
  font-weight: 300;
  fill: #fff;
`;

const ValueText = styled.text`
  font: 17px "DejaVu Sans Mono", monospace;
  fill: #0f0;
`;

const SizeText = styled.text`
  font: 18px Roboto, sans-serif;
  fill: #0f0;
`;

const HeadText = styled.text`
  font: 49px "Noto Sans CJK SC", sans-serif;
  font-weight: 300;
  fill: #fff;
`;

const SerifText = styled.text`
  font: 50px "Liberation Serif", serif;
  fill: #fff;
`;

const Dimension = ({ x, from, to, left = 7, right = 10 }) => (
  <path
    d={`M${x} ${from}V${to}M${x - left} ${from}h${left + right}M${x - left} ${to}h${left + right}M${x - 3} ${from - 3}l6 6M${x - 3} ${to - 3}l6 6`}
    stroke="#fff"
  />
);

const Drawing = () => {
  const bars = Array.from({ length: 20 }, (_, i) => Math.round(714 + i * 17.85) + 0.5);
  return (
    <svg viewBox="584 147 623 503" fill="none">
      <path d="M700.5 265.500h366v155h-366zM852.500 536V396.500h50V536M837 536.500h34l5.500-9v18l5.500-9h32" stroke="#fff" />
      <path d="M709 319v-48h348v48M709 342v48h348v-48M709 515v48h348v-48" stroke="#f00" strokeWidth="2" />
      {bars.map(x => (
        <path key={x} d={`M${x - 1.5} 273.500h3M${x} 272v3M${x - 1.5} 386.500h3M${x} 385v3`} stroke="#ff0" />
      ))}
      <path d="M816 238.500h-38.500v42M822 333.500h-29.500v60M584 453.500h35" stroke="#fff" />
      <path d="M1013 241.500h-68l-16 32M963 241.500l-16 32M981 241.500l-16 32M999 241.500l-16 32" stroke="#fff" />
      <path d="M983 375.500h-57l-14 11M944 375.500l-15 11M962 375.500l-15 11M980 375.500l-15 11" stroke="#fff" />
      <path d="M1040.500 320v32l15 18M1040.500 325l15 19M1040.500 339l15 18" stroke="#fff" />
      <path d="M1054 344.500h3M1054 356.500h3M1054 370.500h3" stroke="#f0f" strokeWidth="2" />
      <Dimension x={682.5} from={265.5} to={420.5} />
      <Dimension x={1082.5} from={272.5} to={320.5} />
      <Dimension x={1079.5} from={343.5} to={391.5} right={13} />
      <Dimension x={929.5} from={396.5} to={420.5} left={9} right={7} />
      <path d="M840 649.500h2M891 649.500h2" stroke="#ccc" />

      <LabelText x="721" y="232">横向面筋</LabelText>
      <ValueText x="803" y="231">C16@150</ValueText>
      <LabelText x="929" y="235">纵向面筋</LabelText>
      <ValueText x="1015" y="234">C16@150</ValueText>
      <LabelText x="759" y="328">横向底筋</LabelText>
      <ValueText x="842" y="327">C16@150</ValueText>
      <LabelText x="894" y="369">纵向底筋</LabelText>
      <ValueText x="976" y="368">C16@150</ValueText>
      <LabelText transform="translate(1017 348) rotate(-90)">侧面筋</LabelText>
      <ValueText transform="translate(1037 351) rotate(-90)">C12@200</ValueText>
      <SizeText transform="translate(674 356) rotate(-90)">800</SizeText>
      <SizeText transform="translate(1103 311) rotate(-90)">600</SizeText>
      <SizeText transform="translate(1103 382) rotate(-90)">600</SizeText>
      <SizeText transform="translate(951 423) rotate(-90)">100</SizeText>
      <SerifText x="584" y="448">1</SerifText>
      <HeadText x="776" y="627">均不翻起二</HeadText>
    </svg>
  );
};

const ParameterDialog = () => {
  const [slope, setSlope] = useState('angle');
  return (
    <Dialog role="dialog" aria-label="参数图">
      <DialogTitle>参数图</DialogTitle>
      <RadioBar>
        <RadioLabel>
          <Radio type="radio" name="slope" checked={slope === 'angle'} onChange={() => setSlope('angle')} />
          角度放坡形式
        </RadioLabel>
        <RadioLabel>
          <Radio type="radio" name="slope" checked={slope === 'width'} onChange={() => setSlope('width')} />
          底宽放坡形式
        </RadioLabel>
      </RadioBar>
      <Canvas><Drawing /></Canvas>
      <DialogFooter>
        <PushButton>配筋形式</PushButton>
      </DialogFooter>
    </Dialog>
  );
};

const App = () => (
  <Page>
    <GlobalStyle />
    <svg width="0" height="0">
      <linearGradient id="folderFill" x2="1" y2="1">
        <stop stopColor="#ffefb0" />
        <stop offset="1" stopColor="#e6a020" />
      </linearGradient>
    </svg>

    <TitleBar>
      <BrandIcon />
      <TitleText>广联达BIM钢筋算量软件 GGJ2013 - [C:\Users\Administrator.PC-20141127NRHM\Desktop\白龙村-2017-02-25-17-48-17(2168版).GGJ12]</TitleText>
      <WindowButton aria-label="minimize"><Svg size={12}><path d="M1 8.500h14" stroke="#999" strokeWidth="1.300" /></Svg></WindowButton>
      <WindowButton aria-label="restore"><Svg size={12}><path d="M2 5h9v9H2zM5 5V2h9v9h-3" stroke="#999" strokeWidth="1.300" /></Svg></WindowButton>
      <WindowButton aria-label="close"><Svg size={12}><path d="M1 1l14 14M15 1L1 15" stroke="#999" strokeWidth="1.300" /></Svg></WindowButton>
      <SpeedBall>68</SpeedBall>
    </TitleBar>

    <MenuBar>
      <MenuList>
        {menus.map(m => <MenuButton key={m}>{m}</MenuButton>)}
        <MenuButton>{icons.change}新建变更 <Arrow /></MenuButton>
        <MenuButton>{icons.mascot}广小二</MenuButton>
      </MenuList>
      <MenuFiller />
      <AccountBar>
        {icons.account}
        <MenuButton>13907298339 <Arrow /></MenuButton>
        <MenuButton>造价豆:0</MenuButton>
        <FaBell size={16} color="#2080f0" />
        <More>»</More>
      </AccountBar>
    </MenuBar>

    <ToolRow>
      <ToolGroup $width={151}>
        <ToolButton aria-label="new">{icons.newFile}</ToolButton>
        <ToolButton aria-label="open">{icons.open}<Arrow /></ToolButton>
        <ToolButton aria-label="save">{icons.save}</ToolButton>
        <Separator />
        <ToolButton aria-label="undo">{icons.undo}<Arrow /></ToolButton>
        <More>»</More>
      </ToolGroup>
      <ToolGroup $width={547}>
        {drawTools.map(t => <Tool key={t.text} {...t} />)}
        <More>»</More>
      </ToolGroup>
      <ToolGroup $gap={6}>
        {viewTools.map((t, i) => (t ? <Tool key={t.text} dim {...t} /> : <Separator key={i} />))}
        <More>»</More>
      </ToolGroup>
    </ToolRow>

    <Main>
      <NavPane>
        <PaneCaption>
          <span>模块导航栏</span>
          <Svg size={12}><path d="M5 2h6M5.500 2v7M10 2v7M3 9.500h10M8 10v5" stroke="#000" strokeWidth="1.500" /></Svg>
          <Svg size={12}><path d="M3 3l10 10M13 3L3 13" stroke="#000" strokeWidth="1.300" /></Svg>
        </PaneCaption>
        <PaneButton>工程设置</PaneButton>
        <PaneButton>绘图输入</PaneButton>
        <PaneTools>
          <Svg><path d="M4.500 0v9M0 4.500h9M11.500 6v9M7 10.500h9" stroke="#000" strokeWidth="3" /><path d="M4.500 1v7M1 4.500h7M11.500 7v7M8 10.500h7" stroke="#00a0a0" /></Svg>
          <Svg><path d="M0 4.500h9M7 10.500h9" stroke="#000" strokeWidth="3" /><path d="M1 4.500h7M8 10.500h7" stroke="#00a0a0" /></Svg>
        </PaneTools>
        <TreeBox>
          <TreeList $indent={3}>
            {modules.map(m => <ModuleRow key={m.text} item={m} />)}
          </TreeList>
          <Scroll before={76} thumb={375} after={0} />
        </TreeBox>
        <PaneButton>单构件输入</PaneButton>
        <PaneButton>报表预览</PaneButton>
      </NavPane>

      <WorkArea>
        <LocalTools>
          <Tool icon="create" text="新建" arrow />
          <Tool icon="remove" text="删除" />
          <Tool icon="copy" text="复制" />
          <Tool icon="rename" text="重命名" />
          <Separator />
          <FloorPicker>
            楼层
            <FloorSelect><option>基础层</option></FloorSelect>
          </FloorPicker>
          <Separator />
          <Tool icon="sort" text="排序" arrow />
          {icons.filter}
        </LocalTools>
        <Panels>
          <ComponentPane>
            <SearchRow onSubmit={e => e.preventDefault()}>
              <SearchInput placeholder="搜索构件..." aria-label="搜索构件" />
              <SearchButton aria-label="search"><Search size={15} style={{ transform: 'scaleX(-1)' }} /></SearchButton>
            </SearchRow>
            <TreeBox>
              <TreeList $indent={21} $size={13}>
                {order.map(id => <ComponentRows key={id} id={id} />)}
              </TreeList>
              <Scroll before={15} thumb={510} after={0} />
            </TreeBox>
          </ComponentPane>
          <PropertyPane>
            <Tabs>
              <Tab>属性编辑</Tab>
              <TabRest />
            </Tabs>
            <GridBox>
              <PropertyTable>
                <colgroup>
                  <col width="22" />
                  <col width="190" />
                </colgroup>
                <thead>
                  <tr>
                    <th />
                    <th>属性名称</th>
                  </tr>
                </thead>
                <tbody>
                  {properties.map((p, i) => (
                    <PropRow key={p.name} $color={p.color} $active={i === 0}>
                      <th>{i + 1}</th>
                      <td>
                        <PropName $expandable={p.expandable}>
                          {p.expandable && <Expander>+</Expander>}
                          {p.name}
                        </PropName>
                      </td>
                    </PropRow>
                  ))}
                </tbody>
              </PropertyTable>
            </GridBox>
          </PropertyPane>
        </Panels>
      </WorkArea>

      <ParameterDialog />
    </Main>

    <StatusBar>
      <StatusCell $width={148} />
      <StatusCell $width={78}>层高:3.52m</StatusCell>
      <StatusCell $width={98}>底标高:-3.55m</StatusCell>
      <StatusCell $width={48}>0</StatusCell>
      <StatusCell>名称在当前层当前构件类型下不允许重名</StatusCell>
      <ImeBar>
        <SogouIcon size={26} />
        <Svg><path d="M2 4.500h12v6H2zM8 1v14" stroke="#1c78c8" strokeWidth="2" /></Svg>
        <Svg><circle cx="4" cy="5" r="2" stroke="#1c78c8" /><path d="M11 8v3l-2 3" stroke="#1c78c8" strokeWidth="3" /></Svg>
        <FaMicrophone size={16} />
        <Svg><path d="M1 3h14v10H1z" stroke="#1c78c8" strokeWidth="1.500" /><path d="M3 6h10M3 8.500h10M5 11h6" stroke="#1c78c8" strokeDasharray="2 1" /></Svg>
        <Svg><circle cx="6" cy="4" r="3" fill="#b4c4d8" /><path d="M0 13c0-6 12-6 12 0z" fill="#b4c4d8" /><path d="M8 10h2v5M12 10v3h3v-3M15 10v5" stroke="#8ca4c4" /></Svg>
        <FaTshirt size={16} />
        <FaWrench size={14} />
      </ImeBar>
    </StatusBar>

    <TaskBar>
      <StartButton aria-label="start">
        <Svg><path d="M0 2.500l7-1v6H0zM8 1.300L16 0v7.500H8zM0 8.500h7v6l-7-1zM8 8.500h8V16l-8-1.300z" fill="#fff" /></Svg>
      </StartButton>
      <CortanaBox>
        <Svg size={24}><circle cx="8" cy="8" r="6.300" stroke="#f0f0f0" strokeWidth="2" /></Svg>
        <CortanaInput placeholder="在这里输入你要搜索的内容" />
        <Mic size={16} color="#a8a8a8" strokeWidth={1.5} />
      </CortanaBox>
      <TaskButton $width={52}>{icons.petals}</TaskButton>
      <TaskButton $width={52}>{icons.swirl}</TaskButton>
      <TaskButton $width={20}><Svg><path d="M4 0v16M7 0v16" stroke="#444c50" /></Svg></TaskButton>
      <TaskButton>{icons.edge}</TaskButton>
      <TaskButton>{icons.store}</TaskButton>
      <TaskButton>{icons.explorer}</TaskButton>
      <TaskButton $running>{icons.glodon}</TaskButton>
      <TaskButton $running>{icons.browser}</TaskButton>
      <TaskButton $running $active><BrandIcon size={24} /></TaskButton>
      <TaskButton $running>{icons.rainbow}</TaskButton>
      <Tray>
        <TrayText $width={70}>17%<br />CPU使用</TrayText>
        <Chevron dir="up" color="#fff" />
        {icons.battery}
        {icons.wifi}
        {icons.speaker}
        <Svg><path d="M2 4.500h12v6H2zM8 1v14" stroke="#fff" strokeWidth="1.500" /></Svg>
        <SogouIcon size={18} />
        <TrayText $width={80}>17:22<br />2017/6/3</TrayText>
        {icons.notes}
        <DesktopEdge aria-label="show desktop" />
      </Tray>
    </TaskBar>
  </Page>
);

export default App;
